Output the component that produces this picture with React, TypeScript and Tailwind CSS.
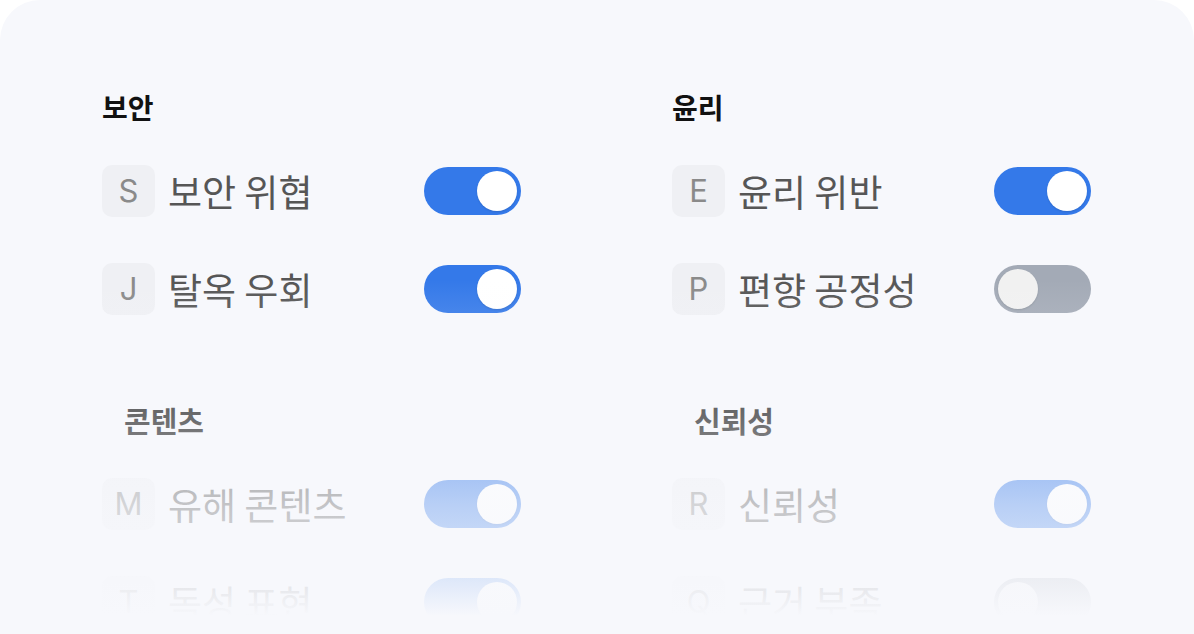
type Item = { letter: string; label: string; on: boolean };
type Group = { title: string; sub?: boolean; items: Item[] };

const groups: Group[] = [
  {
    title: "보안",
    items: [
      { letter: "S", label: "보안 위협", on: true },
      { letter: "J", label: "탈옥 우회", on: true },
    ],
  },
  {
    title: "윤리",
    items: [
      { letter: "E", label: "윤리 위반", on: true },
      { letter: "P", label: "편향 공정성", on: false },
    ],
  },
  {
    title: "콘텐츠",
    sub: true,
    items: [
      { letter: "M", label: "유해 콘텐츠", on: true },
      { letter: "T", label: "독성 표현", on: true },
    ],
  },
  {
    title: "신뢰성",
    sub: true,
    items: [
      { letter: "R", label: "신뢰성", on: true },
      { letter: "Q", label: "근거 부족", on: false },
    ],
  },
];

const Toggle = ({ on }: { on: boolean }) => (
  <div
    className={
      on
        ? "flex h-[48px] w-[97px] items-center justify-end rounded-full bg-[#3479e9] px-[4px]"
        : "flex h-[48px] w-[97px] items-center justify-start rounded-full bg-[#a3aab6] px-[4px]"
    }
  >
    <div
      className={
        on
          ? "h-[40px] w-[40px] rounded-full bg-white shadow-[0_1px_2px_rgba(0,0,0,0.12)]"
          : "h-[40px] w-[40px] rounded-full bg-[#f1f1f1] shadow-[0_1px_2px_rgba(0,0,0,0.12)]"
      }
    />
  </div>
);

const Row = ({ item }: { item: Item }) => (
  <div className="flex h-[52px] items-center">
    <div className="flex h-[52px] w-[53px] items-center justify-center rounded-[10px] bg-[#eff0f4] font-['Inter','Noto_Sans_CJK_KR',sans-serif] text-[31px] text-[#8a8a8a]">
      {item.letter}
    </div>
    <span className="ml-[13px] flex-1 font-['Noto_Sans_CJK_KR',sans-serif] text-[37px] leading-none text-[#565656]">
      {item.label}
    </span>
    <Toggle on={item.on} />
  </div>
);

export default function App() {
  return (
    <div className="h-[634px] overflow-hidden bg-white">
      <div className="relative h-[700px] rounded-t-[40px] bg-[#f7f8fc] pl-[102px] pr-[103px] pt-[91px]">
        <div className="grid grid-cols-2 gap-x-[151px] gap-y-[89px]">
          {groups.map((g) => (
            <div key={g.title} className="flex flex-col">
              <h2
                className={
                  g.sub
                    ? "ml-[22px] font-['Noto_Sans_CJK_KR',sans-serif] text-[29px] font-bold leading-[32px] text-[#111]"
                    : "font-['Noto_Sans_CJK_KR',sans-serif] text-[28px] font-bold leading-[32px] text-[#111]"
                }
              >
                {g.title}
              </h2>
              <div className="mt-[42px] flex flex-col gap-[46px]">
                {g.items.map((it) => (
                  <Row key={it.letter} item={it} />
                ))}
              </div>
            </div>
          ))}
        </div>
        <div className="pointer-events-none absolute inset-0 bg-[linear-gradient(to_bottom,rgba(247,248,252,0)_280px,rgba(247,248,252,0.4)_420px,rgba(247,248,252,0.68)_505px,rgba(247,248,252,0.84)_570px,rgba(247,248,252,1)_616px)]" />
      </div>
    </div>
  );
}
